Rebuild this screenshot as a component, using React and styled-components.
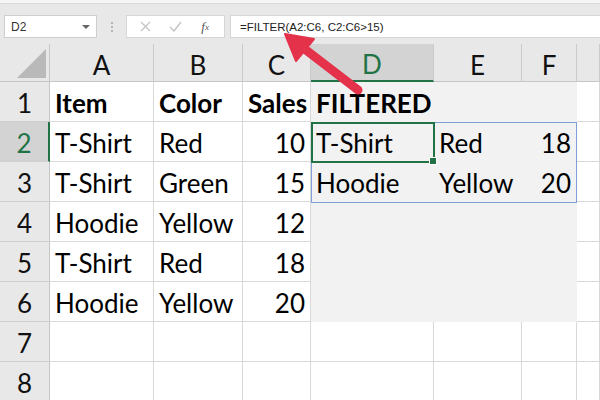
import styled, { createGlobalStyle } from 'styled-components'

const GlobalStyle = createGlobalStyle`
  html, body {
    margin: 0;
    padding: 0;
    background: #ffffff;
    overflow: hidden;
  }
  * { box-sizing: border-box; }
`

const GREEN = '#217346'
const GRID = '#d9d9d9'
const SHADE = '#f2f2f2'

const Window = styled.div`
  position: relative;
  width: 600px;
  height: 400px;
  overflow: hidden;
  background: #ffffff;
  font-family: Lato, 'Open Sans', sans-serif;
`
const TopEdge = styled.div`
  height: 4px;
  background: #f5f5f5;
  border-bottom: 1px solid #dcdcdc;
`
const FormulaBar = styled.div`
  display: flex;
  align-items: center;
  height: 40px;
  padding: 9px 0 4px 4px;
  background: #e8e8e8;
`
const NameBox = styled.div`
  display: flex;
  align-items: center;
  justify-content: space-between;
  width: 93px;
  height: 23px;
  padding: 0 6px;
  background: #ffffff;
  border: 1px solid #cfcfcf;
  font-family: 'Liberation Sans', sans-serif;
  font-size: 12px;
  color: #333;
`
const Caret = styled.span`
  width: 0;
  height: 0;
  border-left: 4px solid transparent;
  border-right: 4px solid transparent;
  border-top: 4px solid #666;
`
const Grip = styled.div`
  width: 29px;
  display: flex;
  flex-direction: column;
  align-items: center;
  gap: 2px;
  span {
    width: 2px;
    height: 2px;
    background: #b5b5b5;
  }
`
const ButtonBox = styled.div`
  display: flex;
  align-items: center;
  justify-content: space-around;
  width: 99px;
  height: 23px;
  padding: 0 4px;
  background: #ffffff;
  border: 1px solid #d6d6d6;
`
const BarButton = styled.span`
  display: flex;
  align-items: center;
  justify-content: center;
  width: 22px;
  color: ${p => (p.$dim ? '#c4c4c4' : '#555')};
  font-family: 'Liberation Serif', serif;
  font-style: italic;
  font-size: 13px;
`
const Input = styled.div`
  flex: 1;
  height: 23px;
  margin-left: 5px;
  padding: 0 9px;
  display: flex;
  align-items: center;
  background: #ffffff;
  border: 1px solid #d6d6d6;
  border-right: none;
  font-family: 'Liberation Sans', sans-serif;
  font-size: 11.5px;
  color: #222;
`
const Sheet = styled.div`
  position: relative;
  display: grid;
  grid-template-columns: 50px 104px 89px 68px 123px 88px 55px 1fr;
  grid-template-rows: 38px repeat(8, 40px);
  background: #e8e8e8;
`
const Corner = styled.div`
  position: relative;
  background: #e8e8e8;
  border-right: 1px solid #c6c6c6;
  border-bottom: 1px solid #c6c6c6;
  &::after {
    content: '';
    position: absolute;
    right: 3px;
    bottom: 3px;
    width: 0;
    height: 0;
    border-left: 29px solid transparent;
    border-bottom: 29px solid #b9b9b9;
  }
`
const ColHead = styled.div`
  display: flex;
  align-items: center;
  justify-content: center;
  padding-top: 4px;
  background: ${p => (p.$active ? '#d3d3d3' : '#e8e8e8')};
  color: ${p => (p.$active ? GREEN : '#111')};
  border-right: 1px solid #cbcbcb;
  border-bottom: ${p => (p.$active ? `2px solid ${GREEN}` : '1px solid #c6c6c6')};
  font-size: 26px;
`
const RowHead = styled.div`
  display: flex;
  align-items: center;
  justify-content: center;
  padding-top: 2px;
  background: ${p => (p.$active ? '#d3d3d3' : '#e8e8e8')};
  color: ${p => (p.$active ? GREEN : '#111')};
  border-right: ${p => (p.$active ? `2px solid ${GREEN}` : '1px solid #c6c6c6')};
  border-bottom: 1px solid #d0d0d0;
  font-size: 26px;
`
const Cell = styled.div`
  display: flex;
  align-items: center;
  justify-content: ${p => (p.$num ? 'flex-end' : 'flex-start')};
  padding: 2px 5px 0 5px;
  background: ${p => (p.$shade ? SHADE : '#ffffff')};
  border-right: 1px solid ${p => (p.$shade ? SHADE : GRID)};
  border-bottom: 1px solid ${p => (p.$shade ? SHADE : GRID)};
  color: #000;
  font-size: 26px;
  font-weight: ${p => (p.$bold ? 700 : 400)};
  white-space: nowrap;
`
const SpillFrame = styled.div`
  position: absolute;
  left: 311px;
  top: 78px;
  width: 266px;
  height: 81px;
  border: 1px solid #7f9fd6;
  pointer-events: none;
`
const ActiveCell = styled.div`
  position: absolute;
  left: 311px;
  top: 78px;
  width: 124px;
  height: 41px;
  border: 2px solid ${GREEN};
  pointer-events: none;
  &::after {
    content: '';
    position: absolute;
    right: -4px;
    bottom: -4px;
    width: 6px;
    height: 6px;
    background: ${GREEN};
    border: 1px solid #ffffff;
  }
`
const Pointer = styled.svg`
  position: absolute;
  left: 0;
  top: 0;
  pointer-events: none;
`

// G only shows a sliver at the right edge, so its letter is off screen
const columns = ['A', 'B', 'C', 'D', 'E', 'F', '']

const rows = [
  [{ v: 'Item', b: true }, { v: 'Color', b: true }, { v: 'Sales', b: true }, { v: 'FILTERED', b: true }, {}, {}, {}],
  [{ v: 'T-Shirt' }, { v: 'Red' }, { v: '10', n: true }, { v: 'T-Shirt' }, { v: 'Red' }, { v: '18', n: true }, {}],
  [{ v: 'T-Shirt' }, { v: 'Green' }, { v: '15', n: true }, { v: 'Hoodie' }, { v: 'Yellow' }, { v: '20', n: true }, {}],
  [{ v: 'Hoodie' }, { v: 'Yellow' }, { v: '12', n: true }, {}, {}, {}, {}],
  [{ v: 'T-Shirt' }, { v: 'Red' }, { v: '18', n: true }, {}, {}, {}, {}],
  [{ v: 'Hoodie' }, { v: 'Yellow' }, { v: '20', n: true }, {}, {}, {}, {}],
  [{}, {}, {}, {}, {}, {}, {}],
  [{}, {}, {}, {}, {}, {}, {}],
]

// D1:F6 is tinted to show the filter output area
const shaded = (r, c) => r < 6 && c >= 3 && c <= 5

const App = () => (
  <Window>
    <GlobalStyle />
    <TopEdge />
    <FormulaBar>
      <NameBox>
        D2
        <Caret />
      </NameBox>
      <Grip>
        <span />
        <span />
        <span />
      </Grip>
      <ButtonBox>
        <BarButton $dim>
          <svg width="11" height="11" viewBox="0 0 11 11">
            <path d="M1 1 L10 10 M10 1 L1 10" stroke="currentColor" strokeWidth="1.3" />
          </svg>
        </BarButton>
        <BarButton $dim>
          <svg width="13" height="11" viewBox="0 0 13 11">
            <path d="M1 6 L5 10 L12 1" stroke="currentColor" strokeWidth="1.4" fill="none" />
          </svg>
        </BarButton>
        <BarButton>
          f<sub style={{ fontSize: '9px' }}>x</sub>
        </BarButton>
      </ButtonBox>
      <Input>=FILTER(A2:C6, C2:C6&gt;15)</Input>
    </FormulaBar>
    <Sheet>
      <Corner />
      {columns.map((c, i) => (
        <ColHead key={i} $active={c === 'D'}>
          {c}
        </ColHead>
      ))}
      {rows.map((row, r) => [
        <RowHead key={`h${r}`} $active={r === 1}>
          {r + 1}
        </RowHead>,
        ...row.map((cell, c) => (
          <Cell key={`${r}-${c}`} $num={cell.n} $bold={cell.b} $shade={shaded(r, c)}>
            {cell.v}
          </Cell>
        )),
      ])}
      <SpillFrame />
      <ActiveCell />
    </Sheet>
    <Pointer width="600" height="400" viewBox="0 0 600 400">
      <line x1="302" y1="47" x2="358" y2="90" stroke="#e4324b" strokeWidth="9" strokeLinecap="round" />
      <polygon points="285,34 314,39 296,61" fill="#e4324b" stroke="#e4324b" strokeWidth="2" strokeLinejoin="round" />
    </Pointer>
  </Window>
)

export default App
